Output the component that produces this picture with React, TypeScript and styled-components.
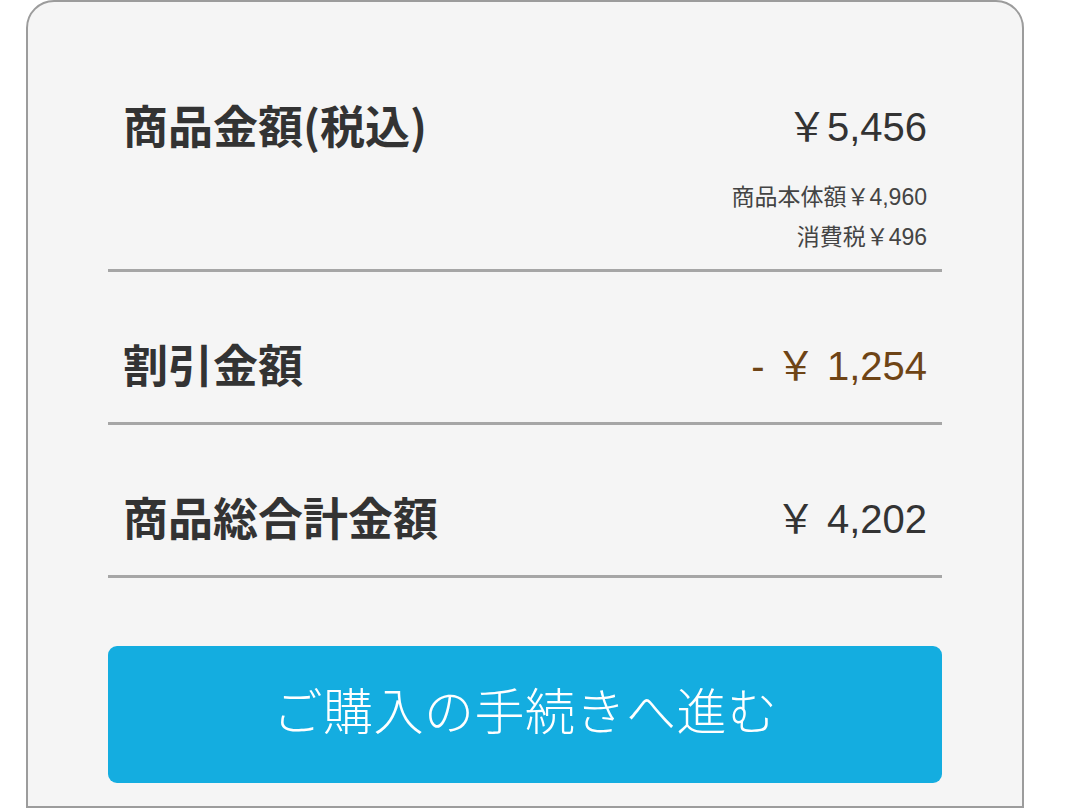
import React from "react";
import styled, { createGlobalStyle } from "styled-components";

const GlobalStyle = createGlobalStyle`
  html, body {
    margin: 0;
    padding: 0;
    background: #ffffff;
  }
  body {
    font-family: "Liberation Sans", "Noto Sans CJK JP", sans-serif;
    color: #333333;
  }
`;

export default function App() {
  return (
    <>
      <GlobalStyle />
      <Page>
        <Card>
          <Row>
            <MainLine>
              <Label>商品金額(税込)</Label>
              <Amount>￥5,456</Amount>
            </MainLine>
            <SubLine $first>商品本体額￥4,960</SubLine>
            <SubLine>消費税￥496</SubLine>
          </Row>
          <Row>
            <MainLine>
              <Label>割引金額</Label>
              <Amount $discount>- ￥ 1,254</Amount>
            </MainLine>
          </Row>
          <Row>
            <MainLine>
              <Label>商品総合計金額</Label>
              <Amount>￥ 4,202</Amount>
            </MainLine>
          </Row>
          <CheckoutButton>ご購入の手続きへ進む</CheckoutButton>
        </Card>
      </Page>
    </>
  );
}

const Page = styled.div`
  width: 1080px;
  height: 808px;
  overflow: hidden;
  padding-left: 26px;
  box-sizing: border-box;
`;

const Card = styled.div`
  width: 998px;
  height: 808px;
  box-sizing: border-box;
  padding: 0 80px;
  background-color: #f5f5f5;
  border: 2px solid #9c9c9c;
  border-radius: 28px 28px 0 0;
  display: flex;
  flex-direction: column;
`;

const Row = styled.div`
  padding: 63px 15px 31px;
  border-bottom: 3px solid #a6a6a6;

  &:first-child {
    padding-top: 94px;
    padding-bottom: 12px;
  }
`;

const MainLine = styled.div`
  display: flex;
  justify-content: space-between;
  align-items: center;
  height: 56px;
`;

const Label = styled.div`
  font-family: "Noto Sans CJK JP", sans-serif;
  font-weight: 700;
  font-size: 45px;
  color: #333333;
`;

const Amount = styled.div<{ $discount?: boolean }>`
  font-family: "Liberation Sans", "Noto Sans CJK JP", sans-serif;
  font-size: 40px;
  white-space: pre;
  color: ${(p) => (p.$discount ? "#6e4416" : "#333333")};
`;

const SubLine = styled.div<{ $first?: boolean }>`
  margin-top: ${(p) => (p.$first ? "25px" : "0")};
  height: 40px;
  line-height: 40px;
  text-align: right;
  font-family: "Liberation Sans", "Noto Sans CJK JP", sans-serif;
  font-size: 23px;
  color: #444444;
`;

const CheckoutButton = styled.button`
  margin-top: 68px;
  width: 100%;
  height: 137px;
  padding: 0 0 14px;
  border: none;
  border-radius: 9px;
  background-color: #14ade0;
  color: #ffffff;
  font-family: "Noto Sans CJK JP", sans-serif;
  font-weight: 300;
  font-size: 50px;
  letter-spacing: 0.5px;
  cursor: pointer;
`;
